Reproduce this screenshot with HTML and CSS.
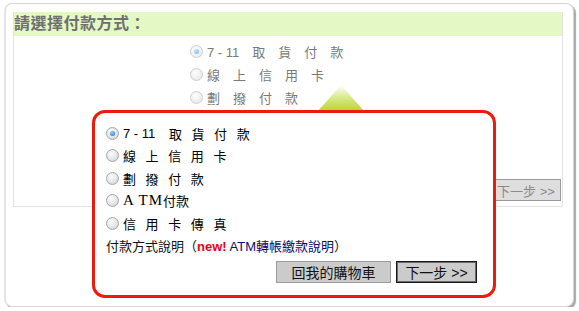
FILE: index.html
```html
<!DOCTYPE html>
<html lang="zh-Hant">
<head>
    <meta charset="UTF-8">
    <title>請選擇付款方式</title>
    <link rel="stylesheet" href="styles.css">
</head>
<body>
    <div class="frame">
        <!-- Payment form behind the popup -->
        <div class="pay-panel">
            <div class="pay-title">請選擇付款方式：</div>
            <div class="pay-options">
                <label class="pay-opt"><span class="radio checked"></span>7 - 11　取　貨　付　款</label>
                <label class="pay-opt"><span class="radio"></span>線　上　信　用　卡</label>
                <label class="pay-opt"><span class="radio"></span>劃　撥　付　款</label>
            </div>
            <div class="pay-actions">
                <button class="btn-faded">下一步 &gt;&gt;</button>
            </div>
        </div>

        <!-- Highlight popup -->
        <div class="pointer"></div>
        <div class="popup">
            <div class="popup-options">
                <label class="popup-opt"><span class="radio checked"></span><span class="tight">7 - 11</span> 取 貨 付 款</label>
                <label class="popup-opt"><span class="radio"></span>線 上 信 用 卡</label>
                <label class="popup-opt"><span class="radio"></span>劃 撥 付 款</label>
                <label class="popup-opt"><span class="radio"></span><span class="atm">A TM</span>付款</label>
                <label class="popup-opt"><span class="radio"></span>信 用 卡 傳 真</label>
            </div>
            <div class="popup-note">付款方式說明（<span class="new">new!</span> <span class="atm-link">ATM轉帳繳款說明</span>）</div>
            <div class="popup-actions">
                <button class="btn">回我的購物車</button>
                <button class="btn btn-focus">下一步 &gt;&gt;</button>
            </div>
        </div>
    </div>
</body>
</html>
```

FILE: styles.css
```css
body {
    margin: 0;
    background: #fff;
    font-family: "Liberation Sans", "Noto Sans CJK TC", sans-serif;
    font-size: 13px;
}

.frame {
    position: relative;
    width: 551px;
    height: 286px;
    margin: 3px 0 0 4px;
    padding: 8px;
    background: #fff;
    border: 1px solid #d6d6d6;
    border-left: 2px solid #e4e4e4;
    border-radius: 8px;
    box-shadow: 2px 2px 1px #a9a9a9;
}

.pay-panel {
    width: 548px;
    height: 194px;
    margin-left: -1px;
    border: 1px solid #e2e2e2;
    border-top: none;
    display: flex;
    flex-direction: column;
}

.pay-title {
    height: 24px;
    line-height: 24px;
    background: #e4f8c6;
    color: #6f6f6f;
    font-size: 16px;
    font-weight: bold;
    letter-spacing: 0.5px;
}

.pay-options {
    padding: 4px 0 0 176px;
    color: #7a7a7a;
}

.pay-opt {
    display: flex;
    align-items: center;
    height: 23px;
}

.pay-actions {
    margin-top: auto;
    padding: 0 1px 5px 0;
    display: flex;
    justify-content: flex-end;
}

.btn-faded {
    width: 70px;
    height: 22px;
    padding: 0;
    background: #dedede;
    border: 1px solid #9a9a9a;
    color: #8a8a8a;
    font-family: inherit;
    font-size: 13px;
}

/* radio buttons, old style */
.radio {
    width: 11px;
    height: 11px;
    margin-right: 4px;
    border: 1px solid #a8a8a8;
    border-radius: 50%;
    background: radial-gradient(circle at 40% 35%, #fdfdfd 0%, #e2e2e2 60%, #c8c8c8 100%);
    display: flex;
    align-items: center;
    justify-content: center;
    flex-shrink: 0;
}

.radio.checked::after {
    content: "";
    width: 5px;
    height: 5px;
    border-radius: 50%;
    background: radial-gradient(circle at 40% 35%, #8fd0ff 0%, #1a6fb8 100%);
}

.pay-options .radio {
    opacity: 0.55;
}

.pointer {
    position: absolute;
    left: 311px;
    top: 81px;
    width: 48px;
    height: 27px;
    clip-path: polygon(50% 0, 100% 100%, 0 100%);
    background: linear-gradient(#ffffff 0%, #d9eb8e 45%, #b6d22c 100%);
}

.popup {
    position: absolute;
    left: 86px;
    top: 106px;
    width: 371px;
    height: 173px;
    padding: 9px 16px 0 11px;
    background: #fff;
    border: 3px solid #ec1c0c;
    border-radius: 13px;
}

.popup-opt {
    display: flex;
    align-items: center;
    height: 22.5px;
    color: #000;
    word-spacing: 6px;
    white-space: pre;
}

.popup-opt .tight {
    margin-right: 4px;
    word-spacing: normal;
}

.popup-opt .atm {
    font-family: "Liberation Serif", serif;
    font-size: 15px;
    letter-spacing: 1px;
    word-spacing: normal;
}

.popup-note {
    height: 22px;
    line-height: 22px;
    margin-top: 1px;
    color: #111;
}

.new {
    color: #e8001c;
    font-weight: bold;
}

.atm-link {
    color: #0a0a6a;
}

.popup-actions {
    margin-top: 3px;
    display: flex;
    justify-content: flex-end;
    gap: 5px;
}

.btn {
    width: 115px;
    height: 22px;
    padding: 0;
    background: #cbcbcb;
    border: 1px solid #9b9b9b;
    color: #111;
    font-family: inherit;
    font-size: 14px;
}

.btn-focus {
    width: 81px;
    border: 1px solid #1a1a1a;
    box-shadow: inset 0 0 0 1px #6a6a6a;
}
```
